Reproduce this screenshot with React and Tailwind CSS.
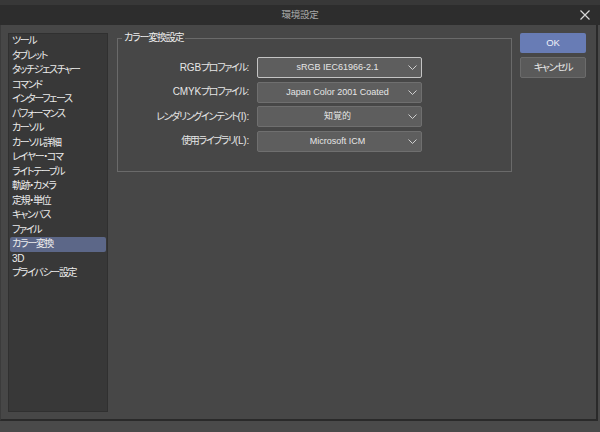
const menuItems = [
  'ツール',
  'タブレット',
  'タッチジェスチャー',
  'コマンド',
  'インターフェース',
  'パフォーマンス',
  'カーソル',
  'カーソル詳細',
  'レイヤー・コマ',
  'ライトテーブル',
  '軌跡・カメラ',
  '定規・単位',
  'キャンバス',
  'ファイル',
  'カラー変換',
  '3D',
  'プライバシー設定',
];

const rows = [
  { label: 'RGBプロファイル:', value: 'sRGB IEC61966-2.1', focused: true },
  { label: 'CMYKプロファイル:', value: 'Japan Color 2001 Coated' },
  { label: 'レンダリングインテント(I):', value: '知覚的' },
  { label: '使用ライブラリ(L):', value: 'Microsoft ICM' },
];

const font = "font-['Liberation_Sans','Noto_Sans_CJK_JP',sans-serif] [font-feature-settings:'palt']";
// narrow UI text, close to the condensed kana of the original
const ui = 'text-[10px] tracking-[-1.35px] leading-none';

// keep latin runs at normal spacing, only the kana get squeezed
function Jp({ text }) {
  return text.split(/([\x20-\x7E]+)/).map((part, i) =>
    /^[\x20-\x7E]+$/.test(part)
      ? <span key={i} className="tracking-[-0.2px]">{part}</span>
      : part
  );
}

export default function App() {
  const active = 'カラー変換';

  return (
    <div className={`w-[600px] h-[432px] bg-[#4a4a4a] overflow-hidden ${font}`}>
      <div className="h-[5px] bg-[#383838]" />

      {/* Title bar */}
      <div className="h-[20px] bg-[#2d2d2d] flex items-center justify-center relative">
        <span className="text-[9.5px] tracking-[-0.3px] text-[#a8a8a8] leading-none">環境設定</span>
        <svg className="absolute right-[10px] top-[5px] w-[10px] h-[10px]" viewBox="0 0 10 10" fill="none" stroke="#d8d8d8" strokeWidth="1.2">
          <path d="M0.5 0.5L9.5 9.5M9.5 0.5L0.5 9.5" />
        </svg>
      </div>

      {/* Body */}
      <div className="w-[598px] h-[396px] bg-[#474747] border-l border-l-[#3b3b3b] border-r-2 border-r-[#2a2a2a] border-b-2 border-b-[#2a2a2a] flex items-start pl-[7px]">

        {/* Category list */}
        <div className="mt-[8px] w-[100px] h-[379px] bg-[#383838] border border-[#303030]">
          {menuItems.map(item => (
            <div key={item} className="h-[14.5px] px-px">
              <div className={`h-full pl-[2px] rounded-[2px] flex items-center text-[#ececec] whitespace-nowrap ${ui} ${item === active ? 'bg-[#5c6788]' : ''}`}>
                <Jp text={item} />
              </div>
            </div>
          ))}
        </div>

        {/* Settings group */}
        <fieldset className="ml-[9px] mt-[6px] w-[395px] h-[141px] border border-[#6a6a6a] pl-0 pr-0 pt-[12px]">
          <legend className="ml-[4px] px-[2px] text-[10px] tracking-[-1.2px] leading-[14px] text-[#ececec]">カラー変換設定</legend>
          <div className="flex flex-col gap-[3.5px]">
            {rows.map(r => (
              <div key={r.label} className="flex items-center">
                <div className={`w-[131px] text-right text-[#e6e6e6] whitespace-nowrap ${ui}`}><Jp text={r.label} /></div>
                <div className={`ml-[8px] w-[165px] h-[21px] rounded-[2px] bg-[#5e5e5e] border flex items-center relative ${r.focused ? 'border-[#c4c4c4]' : 'border-[#6f6f6f]'}`}>
                  <span className="flex-1 text-center text-[9px] text-[#e6e6e6] leading-none pr-[4px] whitespace-nowrap">{r.value}</span>
                  <svg className="absolute right-[4px] top-[7px] w-[9px] h-[5px]" viewBox="0 0 9 5" fill="none" stroke="#cfcfcf" strokeWidth="1">
                    <path d="M0.5 0.5L4.5 4.5L8.5 0.5" />
                  </svg>
                </div>
              </div>
            ))}
          </div>
        </fieldset>

        {/* Buttons */}
        <div className="ml-[8px] mt-[8px] w-[66px] flex flex-col gap-[4px]">
          <button className="h-[20px] rounded-[2px] bg-[#687cb5] text-[9.5px] text-[#eef0f8] leading-none">OK</button>
          <button className={`h-[21px] rounded-[2px] bg-[#5a5a5a] border border-[#6b6b6b] text-[#e8e8e8] ${ui}`}>キャンセル</button>
        </div>
      </div>
    </div>
  );
}
